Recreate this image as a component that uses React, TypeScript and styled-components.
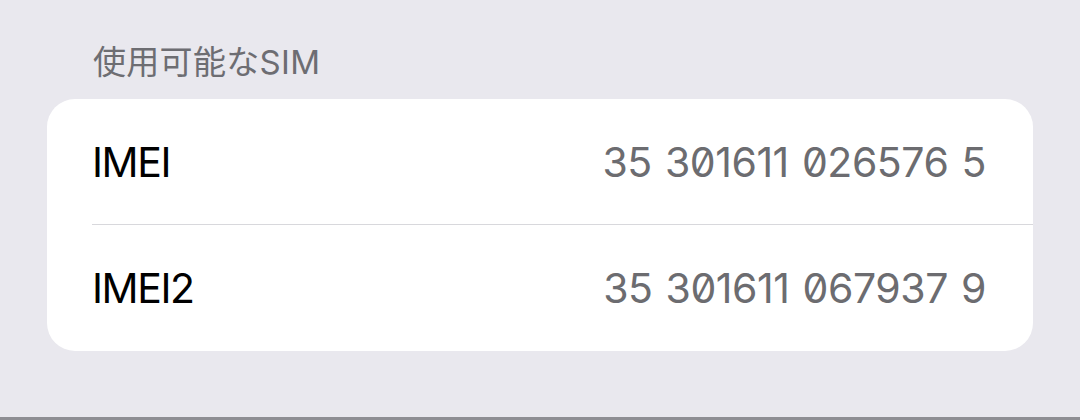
import React from "react";
import styled, { createGlobalStyle } from "styled-components";

const GlobalStyle = createGlobalStyle`
  html, body {
    margin: 0;
    padding: 0;
    background: #e9e8ee;
  }
  body {
    font-family: Inter, "Noto Sans CJK JP", sans-serif;
    -webkit-font-smoothing: antialiased;
  }
`;

const Screen = styled.div`
  width: 1080px;
  height: 420px;
  box-sizing: border-box;
  background: #e9e8ee;
  padding: 41px 47px 0 47px;
  display: flex;
  flex-direction: column;
  border-bottom: 3px solid #8e8e93;
`;

const SectionHeader = styled.div`
  font-family: Inter, "Noto Sans CJK JP", sans-serif;
  font-size: 33px;
  line-height: 42px;
  color: #6d6d72;
  padding-left: 46px;
  margin-bottom: 16px;
  letter-spacing: 0.3px;
`;

const Card = styled.div`
  background: #ffffff;
  border-radius: 28px;
  overflow: hidden;
  display: flex;
  flex-direction: column;
`;

const Row = styled.div<{ $divider?: boolean }>`
  height: 126px;
  box-sizing: border-box;
  margin-left: 45px;
  padding-right: 47px;
  display: flex;
  align-items: center;
  justify-content: space-between;
  border-bottom: ${(p) => (p.$divider ? "1px solid #d8d8dc" : "none")};
`;

const Label = styled.span`
  font-size: 41px;
  color: #000000;
  letter-spacing: -1.4px;
`;

const Value = styled.span`
  font-size: 41px;
  color: #6c6c70;
  font-feature-settings: "zero" 1;
  word-spacing: 2px;
  letter-spacing: -0.45px;
`;

const rows = [
  { label: "IMEI", value: "35 301611 026576 5" },
  { label: "IMEI2", value: "35 301611 067937 9" },
];

export default function App() {
  return (
    <>
      <GlobalStyle />
      <Screen>
        <SectionHeader>使用可能なSIM</SectionHeader>
        <Card>
          {rows.map((r, i) => (
            <Row key={r.label} $divider={i < rows.length - 1}>
              <Label>{r.label}</Label>
              <Value>{r.value}</Value>
            </Row>
          ))}
        </Card>
      </Screen>
    </>
  );
}
